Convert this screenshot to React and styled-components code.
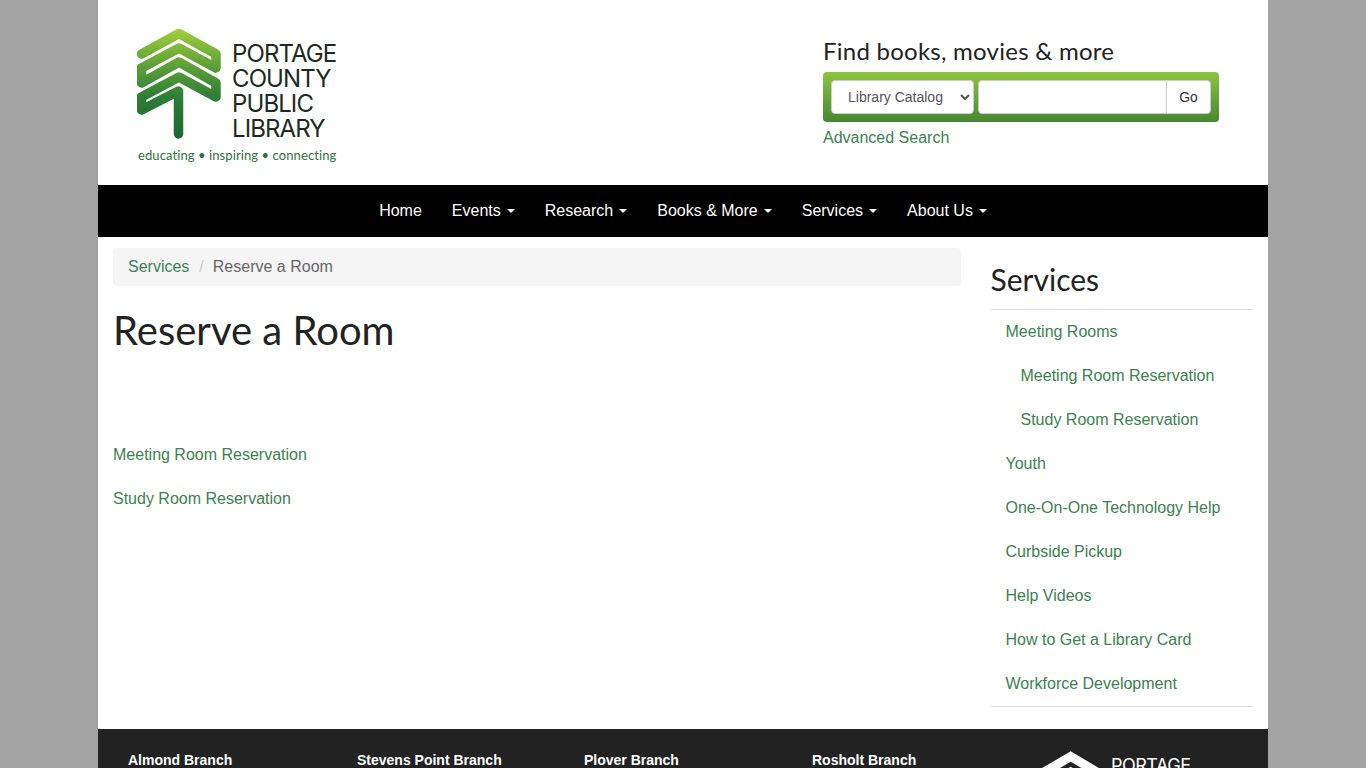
import React from "react";
import styled, { createGlobalStyle } from "styled-components";

const Global = createGlobalStyle`
  html, body { margin: 0; padding: 0; background: #a3a3a3; }
  body { font-family: "Liberation Sans", Arial, sans-serif; font-size: 16px; line-height: 24px; color: #333; }
  * { box-sizing: border-box; }
`;
const heading = `"Lato", "Liberation Sans", sans-serif`;
const linkColor = "#3c8250";

const Page = styled.div`
  width: 1170px;
  margin: 0 auto;
  background: #fff;
`;
const Header = styled.header`
  height: 185px;
  display: flex;
  justify-content: space-between;
  padding: 28px 49px 0 39px;
`;
const LogoWrap = styled.a`
  display: block;
  width: 204px;
`;
const LogoTop = styled.div`
  display: flex;
  align-items: flex-start;
  gap: 5px;
`;
const LogoName = styled.div`
  font-family: "Inter", "Liberation Sans", sans-serif;
  font-size: 24px;
  line-height: 25px;
  letter-spacing: -0.9px;
  color: #1d2b22;
  padding-top: 13px;
`;
const Tagline = styled.div`
  font-family: "Lato", sans-serif;
  font-size: 13px;
  line-height: 16px;
  letter-spacing: 0.09px;
  color: #2f7440;
  margin: 5px 0 0 1px;
  white-space: nowrap;
`;
const SearchArea = styled.div`
  width: 396px;
  padding-top: 8px;
`;
const SearchTitle = styled.h3`
  font-family: ${heading};
  font-weight: 400;
  font-size: 24px;
  line-height: 30px;
  letter-spacing: 0.25px;
  color: #222;
  margin: 0 0 6px;
`;
const SearchBox = styled.form`
  height: 50px;
  border-radius: 4px;
  background: linear-gradient(#8cc63f, #478733);
  padding: 8px;
  display: flex;
`;
const CatalogSelect = styled.select`
  width: 143px;
  height: 34px;
  margin-right: 4px;
  border: 1px solid #ccc;
  border-radius: 4px;
  background: #fff;
  color: #555;
  font-family: inherit;
  font-size: 14px;
  padding: 6px 12px;
`;
const QueryInput = styled.input`
  width: 189px;
  height: 34px;
  border: 1px solid #ccc;
  border-radius: 4px 0 0 4px;
  background: #fff;
  padding: 6px 12px;
`;
const GoButton = styled.button`
  width: 45px;
  height: 34px;
  margin-left: -1px;
  border: 1px solid #ccc;
  border-radius: 0 4px 4px 0;
  background: #fff;
  color: #333;
  font-family: inherit;
  font-size: 14px;
`;
const TextLink = styled.a`
  color: ${linkColor};
  text-decoration: none;
`;
const AdvancedRow = styled.div`
  margin-top: 4px;
`;
const Nav = styled.nav`
  height: 52px;
  background: #000;
  display: flex;
  justify-content: center;
`;
const NavLink = styled.a`
  display: flex;
  align-items: center;
  padding: 0 15px;
  color: #fff;
  text-decoration: none;
`;
const Caret = styled.span`
  display: inline-block;
  width: 0;
  height: 0;
  margin-left: 6px;
  border-top: 4px solid currentColor;
  border-left: 4px solid transparent;
  border-right: 4px solid transparent;
`;
const Columns = styled.div`
  display: grid;
  grid-template-columns: 877.5px 292.5px;
  height: 492px;
`;
const Main = styled.main`
  padding: 11px 15px 0;
`;
const Breadcrumb = styled.ol`
  list-style: none;
  margin: 0 0 22px;
  padding: 7px 15px;
  height: 38px;
  background: #f5f5f5;
  border-radius: 4px;
  display: flex;
`;
const Crumb = styled.li`
  color: #666;
`;
const Slash = styled.li`
  color: #ccc;
  padding: 0 9px 0 10px;
`;
const Title = styled.h1`
  font-family: ${heading};
  font-weight: 400;
  font-size: 40px;
  line-height: 44px;
  color: #222;
  margin: 0 0 91px;
`;
const Para = styled.p`
  margin: 0 0 20px;
`;
const Side = styled.aside`
  padding: 22px 15px 0;
`;
const SideTitle = styled.h2`
  font-family: ${heading};
  font-weight: 400;
  font-size: 30px;
  line-height: 40px;
  color: #222;
  margin: 0;
  padding-bottom: 10px;
  border-bottom: 1px solid #ddd;
`;
const SideList = styled.ul`
  list-style: none;
  margin: 0;
  padding: 0;
  border-bottom: 1px solid #ddd;
`;
const SideItem = styled.li`
  padding: 10px 15px 10px ${(p) => (p.$sub ? 30 : 15)}px;
`;
const Footer = styled.footer`
  background: #222;
  height: 200px;
  padding: 22px 30px 0;
  display: grid;
  grid-template-columns: 229px 227px 228px 198px 1fr;
`;
const BranchName = styled.strong`
  display: block;
  color: #fff;
  font-size: 14px;
  line-height: 18px;
`;
const FooterLogo = styled.div`
  display: flex;
  align-items: flex-start;
`;
const FooterLogoText = styled.div`
  font-family: "Inter", "Liberation Sans", sans-serif;
  font-size: 18px;
  line-height: 22px;
  letter-spacing: -0.5px;
  color: #fff;
  padding-top: 4px;
`;

const Tree = () => (
  <svg width="90" height="114" viewBox="137 27 90 114" style={{ flex: "none", display: "block" }} aria-hidden="true">
    <defs>
      <linearGradient id="tree" gradientUnits="userSpaceOnUse" x1="0" y1="28" x2="0" y2="137">
        <stop offset="0" stopColor="#a0cf3c" />
        <stop offset="0.3" stopColor="#64a538" />
        <stop offset="0.62" stopColor="#2f7d38" />
        <stop offset="1" stopColor="#1f6633" />
      </linearGradient>
    </defs>
    <path
      d="M141.5 53 L179 32.5 L216 53 V67 L179 47 L141.5 67 V82 L179 61 L216 82 V96 L179 76 L141.5 96 V109 L178.5 90 V133"
      fill="none"
      stroke="url(#tree)"
      strokeWidth="9.5"
      strokeLinejoin="round"
      strokeLinecap="round"
    />
  </svg>
);

const FooterTree = () => (
  <svg width="101" height="60" viewBox="0 0 101 60" style={{ flex: "none" }} aria-hidden="true">
    <path d="M24 27 L60.7 5.5 L97 27 M24 42 L60.7 21 L97 42" fill="none" stroke="#fff" strokeWidth="9" />
  </svg>
);

const items = [
  ["Events"], ["Research"], ["Books & More"], ["Services"], ["About Us"],
];
const side = [
  ["Meeting Rooms"],
  ["Meeting Room Reservation", true],
  ["Study Room Reservation", true],
  ["Youth"],
  ["One-On-One Technology Help"],
  ["Curbside Pickup"],
  ["Help Videos"],
  ["How to Get a Library Card"],
  ["Workforce Development"],
];
const branches = ["Almond Branch", "Stevens Point Branch", "Plover Branch", "Rosholt Branch"];

export default function App() {
  return (
    <Page>
      <Global />
      <Header>
        <LogoWrap>
          <LogoTop>
            <Tree />
            <LogoName>PORTAGE<br />COUNTY<br />PUBLIC<br />LIBRARY</LogoName>
          </LogoTop>
          <Tagline>educating • inspiring • connecting</Tagline>
        </LogoWrap>
        <SearchArea>
          <SearchTitle>Find books, movies &amp; more</SearchTitle>
          <SearchBox onSubmit={(e) => e.preventDefault()}>
            <CatalogSelect defaultValue="Library Catalog">
              <option>Library Catalog</option>
              <option>Website</option>
            </CatalogSelect>
            <QueryInput type="text" />
            <GoButton>Go</GoButton>
          </SearchBox>
          <AdvancedRow><TextLink href="#">Advanced Search</TextLink></AdvancedRow>
        </SearchArea>
      </Header>
      <Nav>
        <NavLink href="#">Home</NavLink>
        {items.map(([t]) => (
          <NavLink href="#" key={t}>{t}<Caret /></NavLink>
        ))}
      </Nav>
      <Columns>
        <Main>
          <Breadcrumb>
            <Crumb><TextLink href="#">Services</TextLink></Crumb>
            <Slash>/</Slash>
            <Crumb>Reserve a Room</Crumb>
          </Breadcrumb>
          <Title>Reserve a Room</Title>
          <Para><TextLink href="#">Meeting Room Reservation</TextLink></Para>
          <Para><TextLink href="#">Study Room Reservation</TextLink></Para>
        </Main>
        <Side>
          <SideTitle>Services</SideTitle>
          <SideList>
            {side.map(([t, sub]) => (
              <SideItem key={t} $sub={sub}><TextLink href="#">{t}</TextLink></SideItem>
            ))}
          </SideList>
        </Side>
      </Columns>
      <Footer>
        {branches.map((b) => <BranchName key={b}>{b}</BranchName>)}
        <FooterLogo>
          <FooterTree />
          <FooterLogoText>PORTAGE<br />COUNTY</FooterLogoText>
        </FooterLogo>
      </Footer>
    </Page>
  );
}
